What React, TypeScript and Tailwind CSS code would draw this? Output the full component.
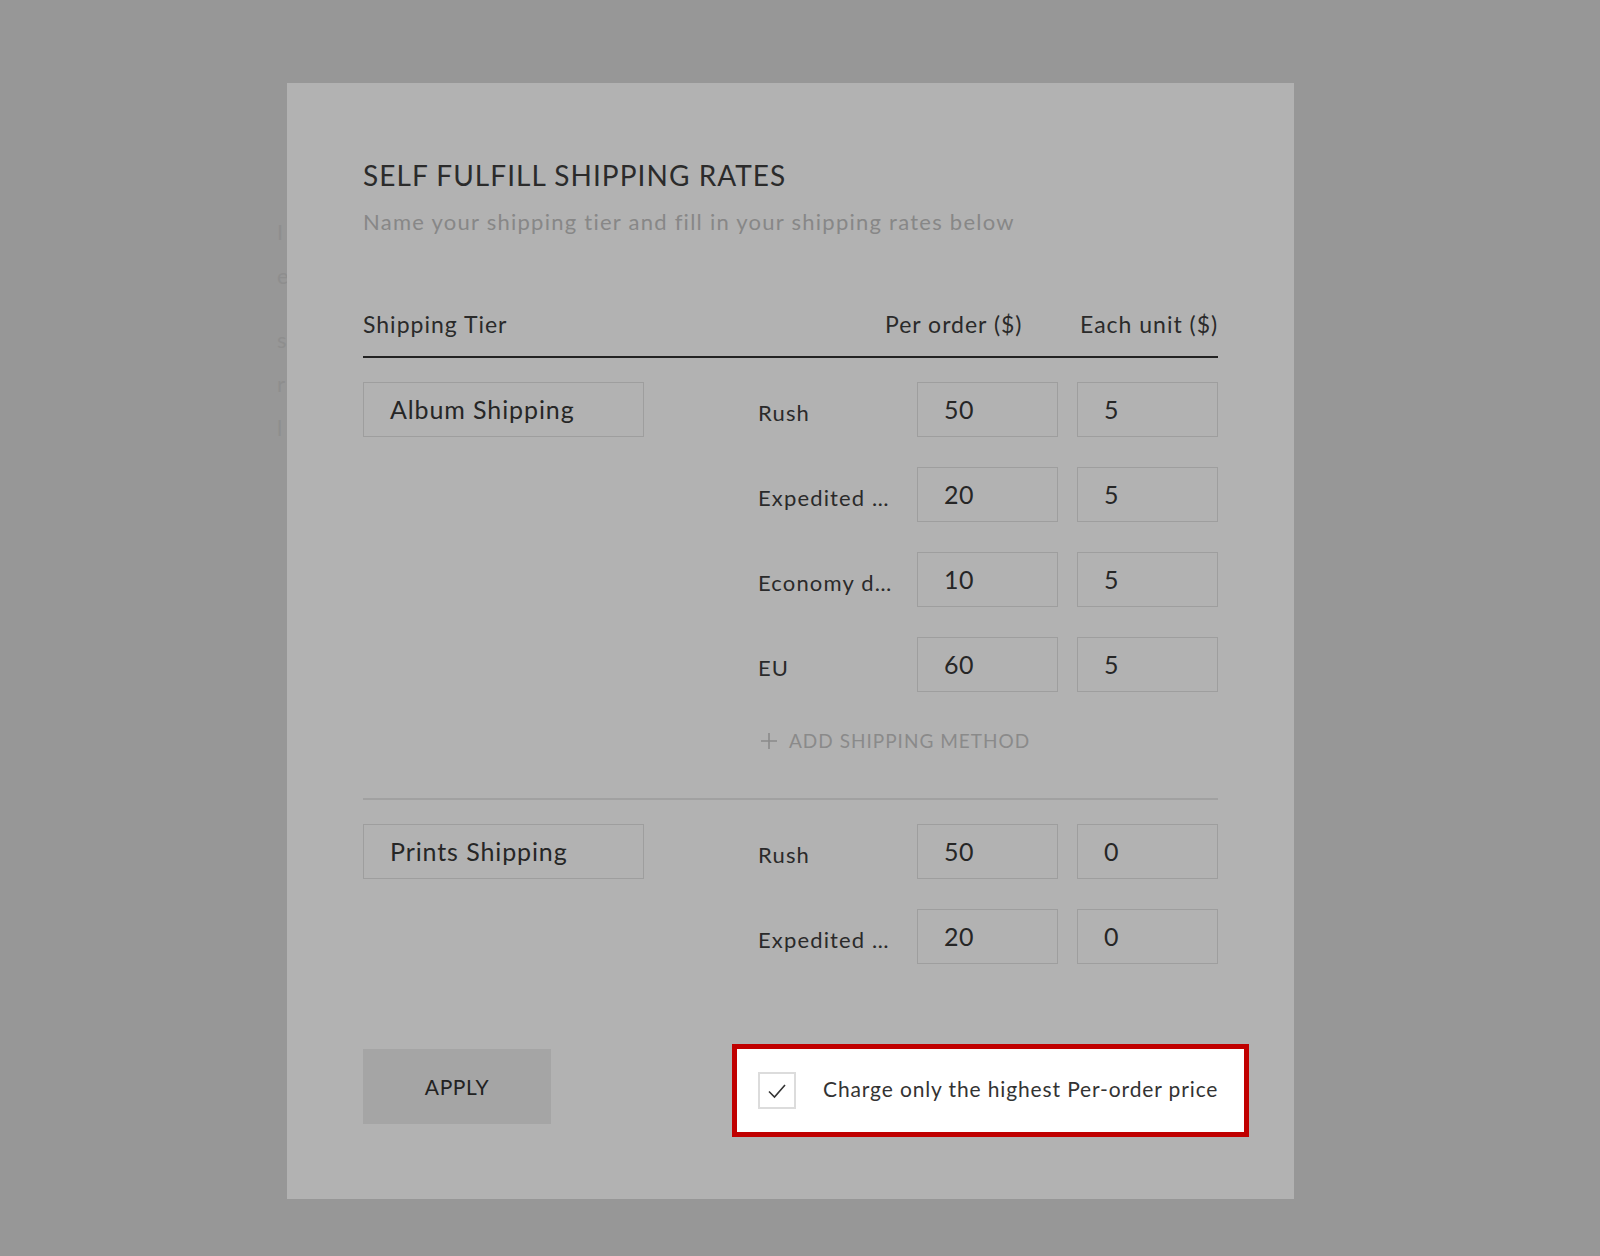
import React from 'react';

type Method = { label: string; perOrder: string; perUnit: string };
type Tier = { name: string; methods: Method[]; canAdd?: boolean };

const TIERS: Tier[] = [
  {
    name: 'Album Shipping',
    canAdd: true,
    methods: [
      { label: 'Rush', perOrder: '50', perUnit: '5' },
      { label: 'Expedited …', perOrder: '20', perUnit: '5' },
      { label: 'Economy d…', perOrder: '10', perUnit: '5' },
      { label: 'EU', perOrder: '60', perUnit: '5' },
    ],
  },
  {
    name: 'Prints Shipping',
    methods: [
      { label: 'Rush', perOrder: '50', perUnit: '0' },
      { label: 'Expedited …', perOrder: '20', perUnit: '0' },
    ],
  },
];

const font = "font-['Lato','Open_Sans',sans-serif]";

const Field: React.FC<{ value: string; className?: string }> = ({ value, className = '' }) => (
  <div className={`h-[55px] flex items-center pl-[26px] border border-[#9e9e9e] text-[#262626] ${className}`}>
    {value}
  </div>
);

const TierBlock: React.FC<{ tier: Tier }> = ({ tier }) => (
  <div className="flex justify-between">
    <Field value={tier.name} className="w-[281px] text-[25px] tracking-[0.9px]" />
    <div className="w-[460px] flex flex-col">
      <div className="flex flex-col gap-[30px]">
        {tier.methods.map((m, i) => (
          <div key={i} className="flex items-center">
            <div className="w-[159px] pt-[6px] text-[22px] tracking-[1.15px] text-[#2a2a2a] whitespace-nowrap">{m.label}</div>
            <Field value={m.perOrder} className="w-[141px] text-[25px] tracking-[0.5px]" />
            <Field value={m.perUnit} className="w-[141px] ml-[19px] text-[25px] tracking-[0.5px]" />
          </div>
        ))}
      </div>
      {tier.canAdd && (
        <div className="mt-[35px] h-[28px] flex items-center text-[#8a8a8a]">
          <svg width="18" height="18" viewBox="0 0 18 18" className="ml-[2px]">
            <path d="M9 1v16M1 9h16" stroke="#8a8a8a" strokeWidth="1.6" fill="none" />
          </svg>
          <span className="ml-[11px] text-[19px] tracking-[1px] uppercase">Add shipping method</span>
        </div>
      )}
    </div>
  </div>
);

export default function App() {
  return (
    <div className={`relative w-full h-[1256px] overflow-hidden bg-[#979797] ${font}`}>
      {/* page underneath the dialog, mostly hidden */}
      <div className="pl-[277px] pt-[210px] text-[#8e8e8e] text-[22px] leading-[44px] w-[1032px]">
        <div className="flex justify-between"><span>I</span><span>^</span></div>
        <div>e</div>
        <div className="mt-[20px] flex justify-between"><span>s</span><span>l</span></div>
        <div className="flex justify-between"><span>r</span><span>s</span></div>
        <div>l</div>
      </div>

      <div className="absolute left-[287px] top-[83px] w-[1007px] h-[1116px] bg-[#b2b2b2] px-[76px] pt-[74px]">
        <h1 className="text-[28px] leading-[36px] font-normal tracking-[1.05px] text-[#2b2b2b] uppercase">
          Self fulfill shipping rates
        </h1>
        <p className="mt-[15px] text-[22px] leading-[28px] tracking-[1.25px] text-[#878787]">
          Name your shipping tier and fill in your shipping rates below
        </p>

        <div className="mt-[74px] flex items-end pb-[18px] border-b-2 border-[#222] text-[23px] leading-[28px] tracking-[1px] text-[#2a2a2a] whitespace-nowrap">
          <div className="flex-1">Shipping Tier</div>
          <div className="w-[140px]">Per order ($)</div>
          <div className="ml-[55px] w-[138px]">Each unit ($)</div>
        </div>

        <div className="mt-[24px]">
          <TierBlock tier={TIERS[0]} />
        </div>
        <div className="mt-[43px] h-[2px] bg-[#a1a1a1]" />
        <div className="mt-[24px]">
          <TierBlock tier={TIERS[1]} />
        </div>

        <div className="mt-[80px] flex justify-between items-start">
          <button className="mt-[5px] w-[188px] h-[75px] bg-[#a5a5a5] text-[21px] font-normal tracking-[0.6px] text-[#222] uppercase">
            Apply
          </button>
          <div className="-mr-[31px] w-[517px] h-[93px] border-[5px] border-[#c00000] bg-white flex items-center pl-[21px]">
            <div className="w-[38px] h-[37px] border-2 border-[#dcdcdc] flex items-center justify-center">
              <svg width="20" height="16" viewBox="0 0 20 16">
                <path d="M2 8.5l5.5 5.5L18 2" stroke="#333" strokeWidth="1.6" fill="none" />
              </svg>
            </div>
            <span className="ml-[27px] -mt-[4px] text-[21px] tracking-[0.87px] text-[#333] whitespace-nowrap">
              Charge only the highest Per-order price
            </span>
          </div>
        </div>
      </div>
    </div>
  );
}
